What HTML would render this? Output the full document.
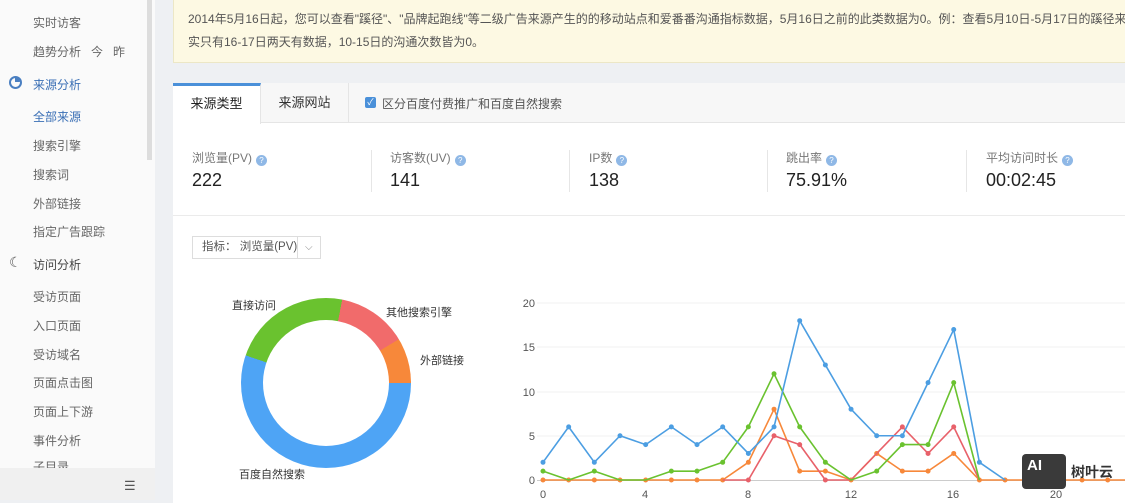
<!DOCTYPE html>
<html><head><meta charset="utf-8"><style>
*{margin:0;padding:0;box-sizing:border-box}
body{width:1125px;height:500px;overflow:hidden;background:#eef0f3;font-family:"Liberation Sans","Noto Sans CJK SC",sans-serif;position:relative;color:#333}
.a{position:absolute}
.side{left:0;top:0;width:155px;height:500px;background:#fafafa}
.side div.i{position:absolute;left:33px;font-size:12px;color:#666}
.notice{left:173px;top:0;width:952px;height:63px;background:#fdf9e3;border:1px solid #ece7c6;border-top:none;border-right:none;font-size:12px;color:#555;line-height:23px;padding:8px 0 0 14px;white-space:nowrap;overflow:hidden}
.card{left:173px;top:83px;width:952px;height:420px;background:#fff;overflow:hidden}
.tabs{left:0;top:0;width:952px;height:40px;background:#f7f7f7;border-bottom:1px solid #e5e5e5}
.lab{font-size:12px;color:#777}
.val{font-size:18px;color:#222}
.q{display:inline-block;width:11px;height:11px;border-radius:50%;background:#8fb8e6;color:#fff;font-size:8px;text-align:center;line-height:11px;vertical-align:-1px;margin-left:4px}
.sep{width:1px;height:42px;background:#e6e6e6;top:67px}
.pl{font-size:11px;color:#333}
</style></head><body>
<div class="a side">
<div class="i" style="top:14px">实时访客</div>
<div class="i" style="top:43px">趋势分析&nbsp;&nbsp;&nbsp;今&nbsp;&nbsp;&nbsp;昨</div>
<div class="a" style="left:9px;top:76px;width:13px;height:13px;border:2px solid #4a7fc1;border-radius:50%"></div>
<div class="a" style="left:15px;top:77px;width:5px;height:5px;background:#4a7fc1;border-radius:0 5px 0 0"></div>
<div class="i" style="top:76px;color:#3a6fb5">来源分析</div>
<div class="i" style="top:108px;color:#3a6fb5">全部来源</div>
<div class="i" style="top:137px">搜索引擎</div>
<div class="i" style="top:166px">搜索词</div>
<div class="i" style="top:195px">外部链接</div>
<div class="i" style="top:223px">指定广告跟踪</div>
<div class="a" style="left:9px;top:254px;font-size:14px;color:#555">☾</div>
<div class="i" style="top:256px;color:#444">访问分析</div>
<div class="i" style="top:288px">受访页面</div>
<div class="i" style="top:317px">入口页面</div>
<div class="i" style="top:346px">受访域名</div>
<div class="i" style="top:374px">页面点击图</div>
<div class="i" style="top:403px">页面上下游</div>
<div class="i" style="top:432px">事件分析</div>
<div class="i" style="top:458px">子目录</div>
<div class="a" style="left:0;top:468px;width:155px;height:32px;background:#f0f0f0"></div>
<div class="a" style="left:124px;top:478px;font-size:13px;color:#555">☰</div>
<div class="a" style="left:147px;top:0;width:5px;height:160px;background:#ddd"></div>
</div>
<div class="a notice">2014年5月16日起，您可以查看"蹊径"、"品牌起跑线"等二级广告来源产生的的移动站点和爱番番沟通指标数据，5月16日之前的此类数据为0。例：查看5月10日-5月17日的蹊径来源的沟通次数时，其<br>实只有16-17日两天有数据，10-15日的沟通次数皆为0。</div>
<div class="a card">
<div class="a tabs">
<div class="a" style="left:0;top:0;width:88px;height:41px;background:#fff;border-top:3px solid #4a90d9;border-right:1px solid #e5e5e5;font-size:13px;text-align:center;line-height:36px;color:#222">来源类型</div>
<div class="a" style="left:88px;top:0;width:88px;height:40px;border-right:1px solid #e5e5e5;font-size:13px;text-align:center;line-height:40px;color:#333">来源网站</div>
<div class="a" style="left:192px;top:14px;width:11px;height:11px;background:#4a90d9;border-radius:2px;color:#fff;font-size:9px;line-height:11px;text-align:center">✓</div>
<div class="a" style="left:209px;top:12px;font-size:12px;color:#555">区分百度付费推广和百度自然搜索</div>
</div>
<div class="a lab" style="left:19px;top:66px">浏览量(PV)<span class="q">?</span></div><div class="a val" style="left:19px;top:87px">222</div>
<div class="a sep" style="left:198px"></div>
<div class="a lab" style="left:217px;top:66px">访客数(UV)<span class="q">?</span></div><div class="a val" style="left:217px;top:87px">141</div>
<div class="a sep" style="left:396px"></div>
<div class="a lab" style="left:416px;top:66px">IP数<span class="q">?</span></div><div class="a val" style="left:416px;top:87px">138</div>
<div class="a sep" style="left:594px"></div>
<div class="a lab" style="left:613px;top:66px">跳出率<span class="q">?</span></div><div class="a val" style="left:613px;top:87px">75.91%</div>
<div class="a sep" style="left:793px"></div>
<div class="a lab" style="left:813px;top:66px">平均访问时长<span class="q">?</span></div><div class="a val" style="left:813px;top:87px">00:02:45</div>
<div class="a" style="left:0;top:132px;width:952px;height:1px;background:#ebebeb"></div>
<div class="a" style="left:19px;top:153px;width:129px;height:23px;border:1px solid #ddd;font-size:11.5px;color:#555;line-height:21px;padding-left:9px">指标： 浏览量(PV)<span style="position:absolute;left:104px;top:0;width:1px;height:21px;background:#ddd"></span><span style="position:absolute;left:112px;top:0;color:#888;font-size:10px">⌵</span></div>
</div>
<div class="a" style="left:241px;top:298px;width:170px;height:170px;border-radius:50%;background:conic-gradient(#6ac22f 0 11deg,#f16b6b 11deg 59deg,#f7883a 59deg 90deg,#4ea4f5 90deg 289deg,#6ac22f 289deg 360deg)"></div>
<div class="a" style="left:263px;top:320px;width:126px;height:126px;border-radius:50%;background:#fff"></div>
<div class="a pl" style="left:232px;top:297px">直接访问</div>
<div class="a pl" style="left:386px;top:304px">其他搜索引擎</div>
<div class="a pl" style="left:420px;top:352px">外部链接</div>
<div class="a pl" style="left:239px;top:466px">百度自然搜索</div>
<svg class="a" style="left:0;top:0" width="1125" height="500">
<g stroke="#f0f0f0" stroke-width="1"><line x1="537" y1="303" x2="1125" y2="303"/><line x1="537" y1="347" x2="1125" y2="347"/><line x1="537" y1="392" x2="1125" y2="392"/><line x1="537" y1="436" x2="1125" y2="436"/></g>
<line x1="537" y1="480.5" x2="1125" y2="480.5" stroke="#ccc"/>
<g font-size="11" fill="#555" font-family="Liberation Sans" text-anchor="end"><text x="535" y="307">20</text><text x="535" y="351">15</text><text x="535" y="396">10</text><text x="535" y="440">5</text><text x="535" y="484">0</text></g>
<g font-size="11" fill="#555" font-family="Liberation Sans" text-anchor="middle"><text x="543" y="498">0</text><text x="645" y="498">4</text><text x="748" y="498">8</text><text x="851" y="498">12</text><text x="953" y="498">16</text><text x="1056" y="498">20</text></g>
<g transform="translate(543,480) scale(25.67,-8.85)" fill="none" stroke-linejoin="round">
<g stroke="#f7883a"><polyline vector-effect="non-scaling-stroke" stroke-width="1.6" points="0,0 1,0 2,0 3,0 4,0 5,0 6,0 7,0 8,2 9,8 10,1 11,1 12,0 13,3 14,1 15,1 16,3 17,0 18,0 19,0 20,0 21,0 22,0 23,0"/><path vector-effect="non-scaling-stroke" stroke-width="5" stroke-linecap="round" d="M0 0h0M1 0h0M2 0h0M3 0h0M4 0h0M5 0h0M6 0h0M7 0h0M8 2h0M9 8h0M10 1h0M11 1h0M12 0h0M13 3h0M14 1h0M15 1h0M16 3h0M17 0h0M18 0h0M21 0h0M22 0h0M23 0h0"/></g>
<g stroke="#e8616a"><polyline vector-effect="non-scaling-stroke" stroke-width="1.6" points="7,0 8,0 9,5 10,4 11,0 12,0 13,3 14,6 15,3 16,6 17,0"/><path vector-effect="non-scaling-stroke" stroke-width="5" stroke-linecap="round" d="M8 0h0M9 5h0M10 4h0M11 0h0M14 6h0M15 3h0M16 6h0"/></g>
<g stroke="#6ac22f"><polyline vector-effect="non-scaling-stroke" stroke-width="1.6" points="0,1 1,0 2,1 3,0 4,0 5,1 6,1 7,2 8,6 9,12 10,6 11,2 12,0 13,1 14,4 15,4 16,11 17,0"/><path vector-effect="non-scaling-stroke" stroke-width="5" stroke-linecap="round" d="M0 1h0M2 1h0M5 1h0M6 1h0M7 2h0M8 6h0M9 12h0M10 6h0M11 2h0M13 1h0M14 4h0M15 4h0M16 11h0"/></g>
<g stroke="#4c9ee2"><polyline vector-effect="non-scaling-stroke" stroke-width="1.6" points="0,2 1,6 2,2 3,5 4,4 5,6 6,4 7,6 8,3 9,6 10,18 11,13 12,8 13,5 14,5 15,11 16,17 17,2 18,0"/><path vector-effect="non-scaling-stroke" stroke-width="5" stroke-linecap="round" d="M0 2h0M1 6h0M2 2h0M3 5h0M4 4h0M5 6h0M6 4h0M7 6h0M8 3h0M9 6h0M10 18h0M11 13h0M12 8h0M13 5h0M14 5h0M15 11h0M16 17h0M17 2h0"/></g>
</g>
</svg>
<div class="a" style="left:1022px;top:454px;width:44px;height:35px;background:#3a3a3a;border-radius:4px;color:#fff;font-weight:bold;font-size:15px;padding:3px 0 0 5px">AI</div>
<div class="a" style="left:1071px;top:462px;font-size:14px;font-weight:bold;color:#333">树叶云</div>
</body></html>
